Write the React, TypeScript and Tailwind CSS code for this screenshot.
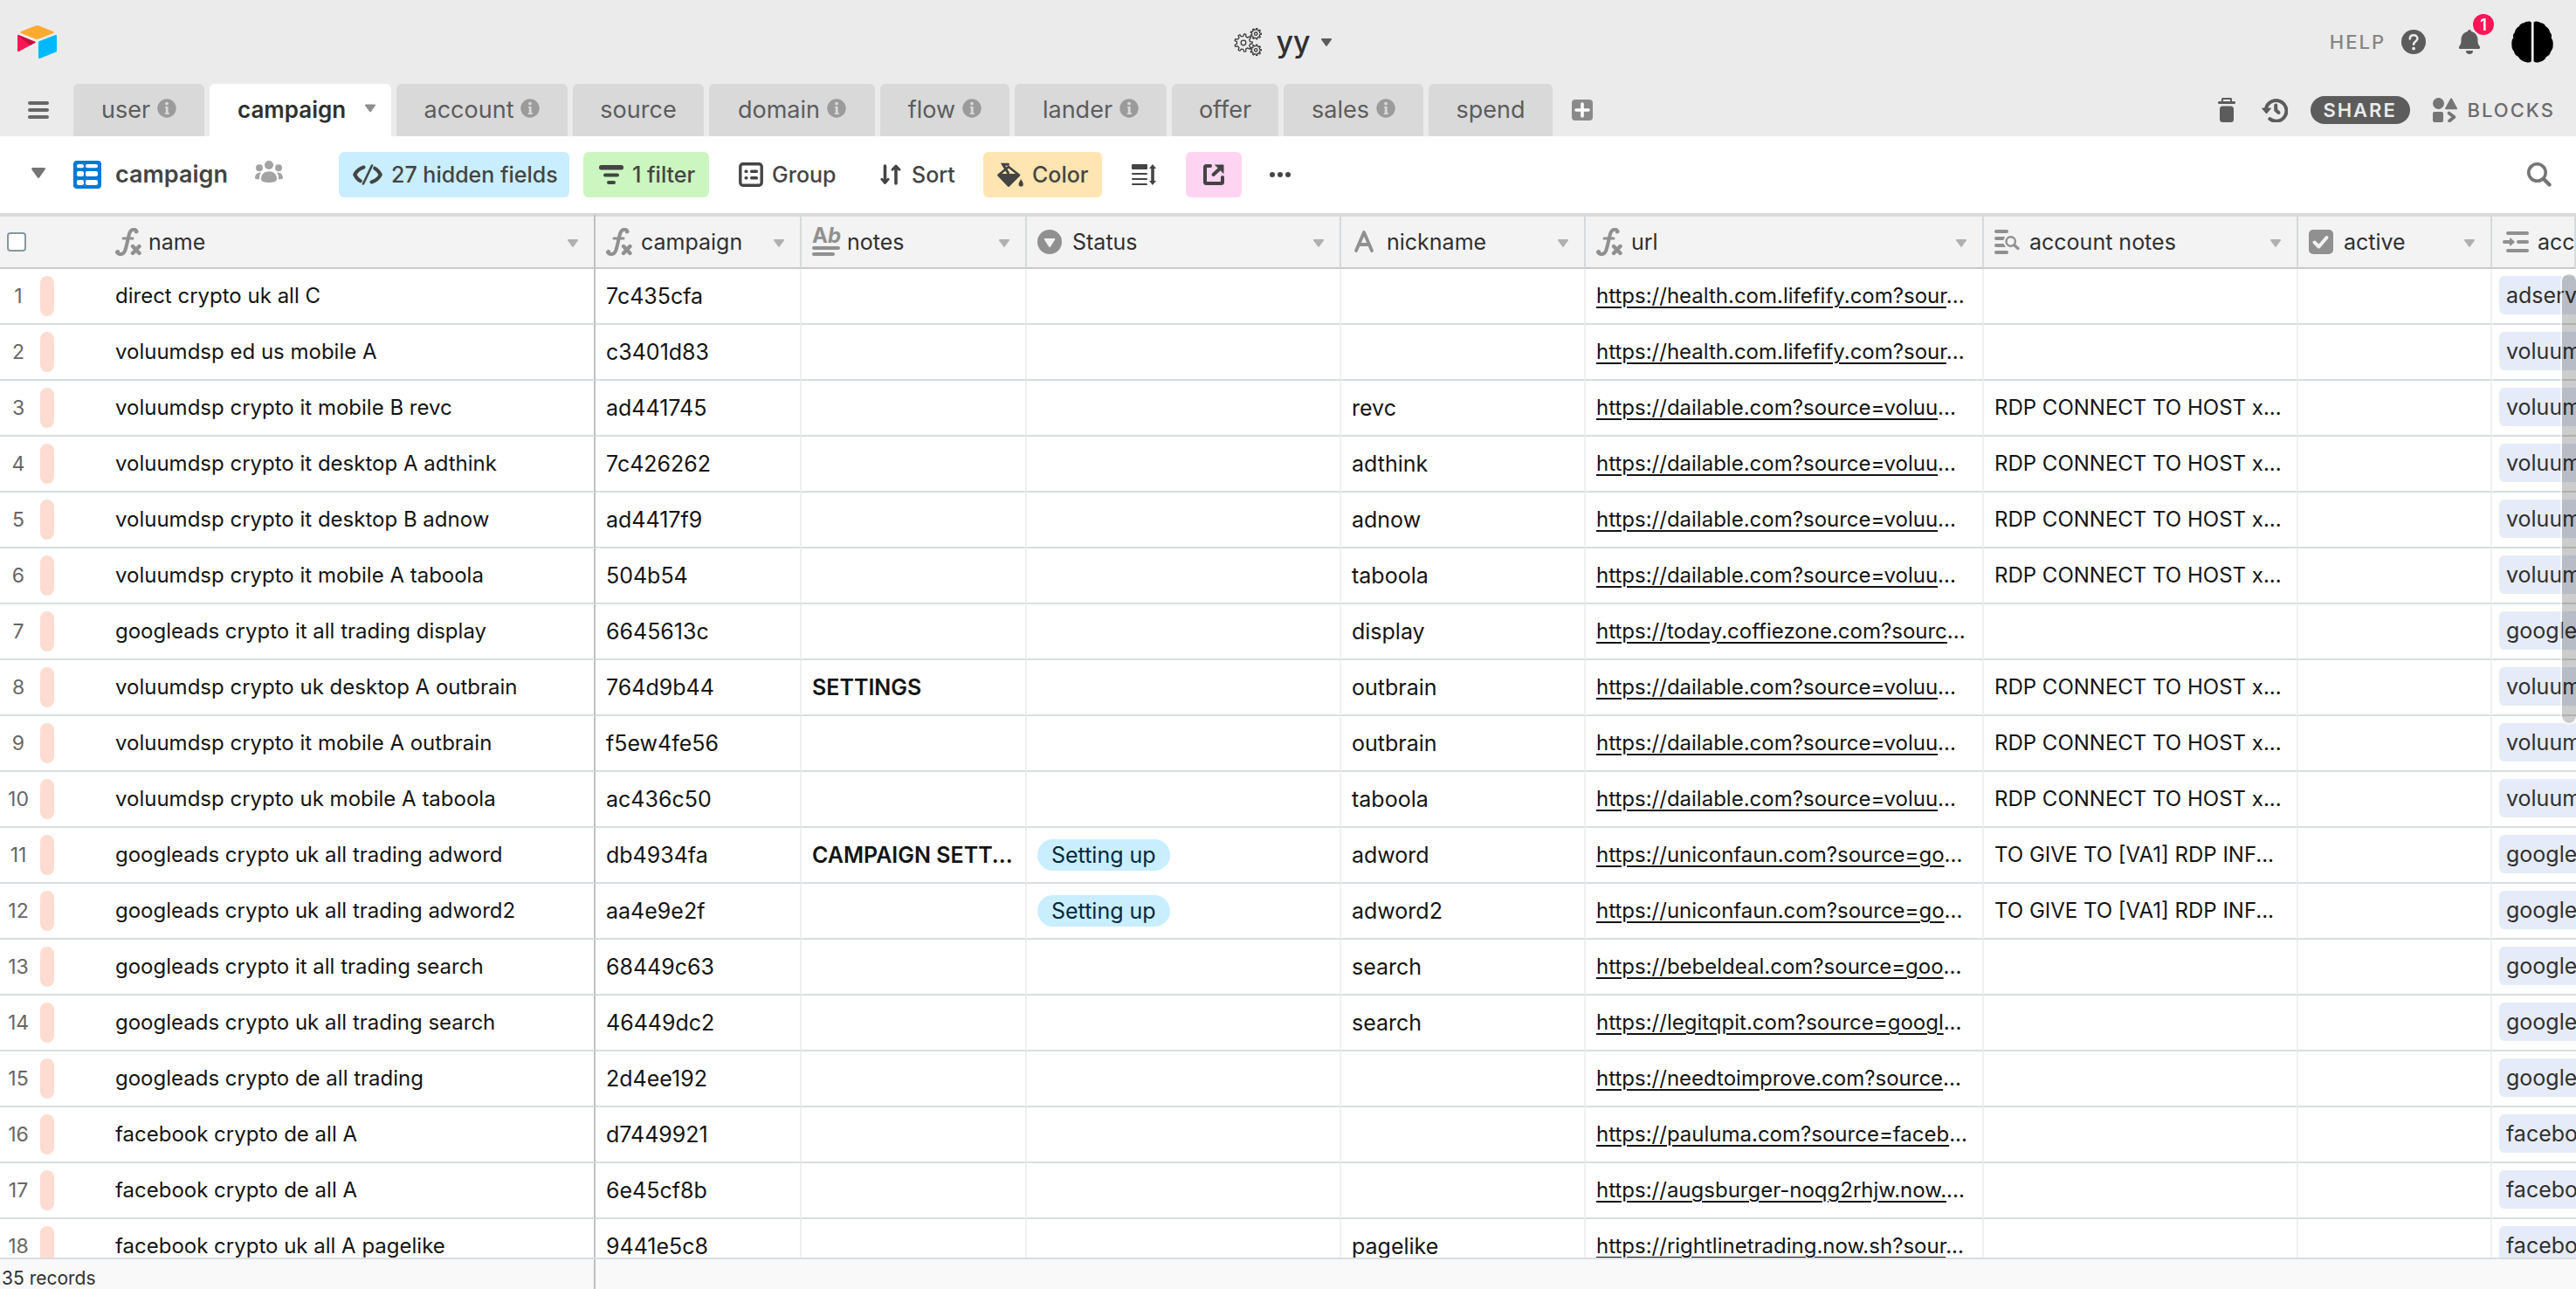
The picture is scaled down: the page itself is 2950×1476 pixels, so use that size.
import React from "react";

type Row = {
  name: string;
  id: string;
  notes?: string;
  status?: string;
  nick?: string;
  url: string;
  acc?: string;
  account: string;
};

const RDP = "RDP CONNECT TO HOST x...";
const VA1 = "TO GIVE TO [VA1] RDP INF...";
const DAIL = "https://dailable.com?source=voluu";

const rows: Row[] = [
  { name: "direct crypto uk all C", id: "7c435cfa", url: "https://health.com.lifefify.com?sour", account: "adserver" },
  { name: "voluumdsp ed us mobile A", id: "c3401d83", url: "https://health.com.lifefify.com?sour", account: "voluumdsp" },
  { name: "voluumdsp crypto it mobile B revc", id: "ad441745", nick: "revc", url: DAIL, acc: RDP, account: "voluumdsp" },
  { name: "voluumdsp crypto it desktop A adthink", id: "7c426262", nick: "adthink", url: DAIL, acc: RDP, account: "voluumdsp" },
  { name: "voluumdsp crypto it desktop B adnow", id: "ad4417f9", nick: "adnow", url: DAIL, acc: RDP, account: "voluumdsp" },
  { name: "voluumdsp crypto it mobile A taboola", id: "504b54", nick: "taboola", url: DAIL, acc: RDP, account: "voluumdsp" },
  { name: "googleads crypto it all trading display", id: "6645613c", nick: "display", url: "https://today.coffiezone.com?sourc", account: "googleads" },
  { name: "voluumdsp crypto uk desktop A outbrain", id: "764d9b44", notes: "SETTINGS", nick: "outbrain", url: DAIL, acc: RDP, account: "voluumdsp" },
  { name: "voluumdsp crypto it mobile A outbrain", id: "f5ew4fe56", nick: "outbrain", url: DAIL, acc: RDP, account: "voluumdsp" },
  { name: "voluumdsp crypto uk mobile A taboola", id: "ac436c50", nick: "taboola", url: DAIL, acc: RDP, account: "voluumdsp" },
  { name: "googleads crypto uk all trading adword", id: "db4934fa", notes: "CAMPAIGN SETT...", status: "Setting up", nick: "adword", url: "https://uniconfaun.com?source=go", acc: VA1, account: "googleads" },
  { name: "googleads crypto uk all trading adword2", id: "aa4e9e2f", status: "Setting up", nick: "adword2", url: "https://uniconfaun.com?source=go", acc: VA1, account: "googleads" },
  { name: "googleads crypto it all trading search", id: "68449c63", nick: "search", url: "https://bebeldeal.com?source=goo", account: "googleads" },
  { name: "googleads crypto uk all trading search", id: "46449dc2", nick: "search", url: "https://legitqpit.com?source=googl", account: "googleads" },
  { name: "googleads crypto de all trading", id: "2d4ee192", url: "https://needtoimprove.com?source", account: "googleads" },
  { name: "facebook crypto de all A", id: "d7449921", url: "https://pauluma.com?source=faceb", account: "facebook" },
  { name: "facebook crypto de all A", id: "6e45cf8b", url: "https://augsburger-noqg2rhjw.now.", account: "facebook" },
  { name: "facebook crypto uk all A pagelike", id: "9441e5c8", nick: "pagelike", url: "https://rightlinetrading.now.sh?sour", account: "facebook" },
];

function Caret({ className }: { className: string }) {
  return (
    <svg viewBox="0 0 12 9" className={className} fill="currentColor" aria-hidden="true">
      <path d="M1 0h10a1 1 0 0 1 .8 1.5L6.7 8.6a.9.9 0 0 1-1.4 0L.2 1.5A1 1 0 0 1 1 0z" />
    </svg>
  );
}

function Logo() {
  return (
    <svg viewBox="0 0 45 38" className="h-[38px] w-[45px]" aria-hidden="true">
      <path d="M20.5.4a6 6 0 0 1 4 0l16.3 6.7c1 .4 1 1.5 0 1.9l-16.300 6.600a6 6 0 0 1-4 0L4.100 9c-1-.4-1-1.500 0-1.900z" fill="#ffa92d" />
      <path d="M24 19.500c0-.6.3-1 .8-1.200L43.600 11c.7-.3 1.400.2 1.400.9v17.500c0 .5-.3.900-.8 1.100L25.400 37.900c-.7.3-1.400-.200-1.400-.900z" fill="#00b9fc" />
      <path d="M1.600 11.200 20 18.700c.7.300.7 1.100 0 1.400L2 29.700c-.800.500-2 .1-2-.8V12c0-.8.900-1.100 1.600-.8z" fill="#ff1656" />
      <path d="M1.600 11.200 20 18.700c.7.300.7 1.100 0 1.400l-5.500 2.900L.5 11.400z" fill="#c4113f" />
    </svg>
  );
}

function gear(cx: number, cy: number, ro: number, ri: number, n: number) {
  const pts: string[] = [];
  for (let i = 0; i < n; i++) {
    const steps: [number, number][] = [
      [-0.28, ri],
      [-0.14, ro],
      [0.14, ro],
      [0.28, ri],
    ];
    for (const [f, r] of steps) {
      const a = ((i + f) / n) * Math.PI * 2;
      pts.push(`${(cx + r * Math.cos(a)).toFixed(2)} ${(cy + r * Math.sin(a)).toFixed(2)}`);
    }
  }
  return `M${pts.join("L")}Z`;
}

function Gears() {
  return (
    <svg viewBox="0 0 32 32" className="size-8" fill="none" stroke="#3d3d3d" strokeWidth="1.3" strokeLinejoin="round" aria-hidden="true">
      <path d={gear(11, 17, 10.2, 7.6, 9)} />
      <circle cx="11" cy="17" r="2.8" />
      <path d={gear(25.2, 6.7, 6.2, 4.6, 9)} />
      <circle cx="25.2" cy="6.7" r="1.7" />
      <path d={gear(25.2, 25.3, 6.2, 4.6, 9)} />
      <circle cx="25.2" cy="25.3" r="1.7" />
    </svg>
  );
}

function Info() {
  return (
    <svg viewBox="0 0 22 22" className="mb-1 size-[22px] shrink-0" aria-hidden="true">
      <circle cx="11" cy="11" r="10.700" fill="#9b9b9b" />
      <circle cx="11" cy="5.600" r="1.900" fill="#d9d9d9" />
      <path d="M9 9h3.600v7.200H14V18H8.800v-1.800h1V10.600H9z" fill="#d9d9d9" />
    </svg>
  );
}

const tabs: { label: string; info?: boolean; w: string }[] = [
  { label: "user", info: true, w: "w-[150px]" },
  { label: "campaign", w: "w-[208px]" },
  { label: "account", info: true, w: "w-[196px]" },
  { label: "source", w: "w-[150px]" },
  { label: "domain", info: true, w: "w-[190px]" },
  { label: "flow", info: true, w: "w-[148px]" },
  { label: "lander", info: true, w: "w-[174px]" },
  { label: "offer", w: "w-[122px]" },
  { label: "sales", info: true, w: "w-[160px]" },
  { label: "spend", w: "w-[142px]" },
];

function TopBar() {
  return (
    <header className="bg-[#ebebeb]">
      <div className="grid h-24 grid-cols-[1fr_auto_1fr] items-center px-5">
        <a href="#home" aria-label="Home" className="justify-self-start">
          <Logo />
        </a>
        <button className="flex items-center pr-3">
          <Gears />
          <h1 className="ml-4 text-[34px] leading-10 font-medium text-[#303030]">yy</h1>
          <Caret className="ml-3 h-[9px] w-3 text-[#5c5c5c]" />
        </button>
        <div className="flex items-center justify-self-end pr-[6px]">
          <button className="flex items-center text-[22px] font-medium tracking-[2px] text-[#858585]">
            HELP
            <svg viewBox="0 0 28 28" className="ml-[18px] size-7" aria-hidden="true">
              <circle cx="14" cy="14" r="14" fill="#5c5c5c" />
              <path d="M9.800 10.600c0-2.600 1.800-4.300 4.300-4.300s4.300 1.600 4.300 3.900c0 3.300-4.300 3.300-4.300 6.500" fill="none" stroke="#ebebeb" strokeWidth="2.500" strokeLinecap="round" />
              <circle cx="14.100" cy="21.600" r="1.900" fill="#ebebeb" />
            </svg>
          </button>
          <button className="relative ml-[38px]" aria-label="Notifications">
            <svg viewBox="0 0 24 28" className="h-7 w-6" fill="#5c5c5c" aria-hidden="true">
              <path d="M12 0c1.100 0 2 .8 2 1.900 4.500 1 7.500 4.700 7.500 9.600 0 4.200.4 5.400 2.200 7.600.9 1.200.2 2.900-1.200 2.900h-21C.1 22-.6 20.300.3 19.100c1.800-2.200 2.200-3.400 2.200-7.600 0-4.900 3-8.600 7.500-9.600C10 .8 10.900 0 12 0z" />
              <path d="M8 24h8a4 4 0 0 1-8 0z" />
            </svg>
            <span className="absolute -top-[18px] left-4 flex size-6 items-center justify-center rounded-full bg-[#ff1656] text-[18px] font-semibold text-white">1</span>
          </button>
          <button className="ml-9" aria-label="Account">
            <svg viewBox="0 0 48 48" className="size-12" fill="#000" aria-hidden="true">
              <path d="M22.800 1.500C21-.3 16.500.3 14.500 2.300c-2.500 0-5 1.800-5.500 3.700C6 7.500 4 10.500 4 13c-2 1.500-2.500 4.500-1.700 6.500C.5 21 0 25 .5 28c-.3 3 1.200 5.500 2.500 7 .5 3 2.500 5 5 6 1.500 3 5 5.500 8.500 6 3 1 5.500.500 6.300-1z" />
              <path d="M25.600 1.500c1.800-1.800 6-1.200 8 .8 2.500 0 5 1.800 5.500 3.700 3 1.500 5 4.500 5 7 2 1.500 2.300 4.500 1.500 6.500 1.800 1.500 2.500 5.500 2 8.500.3 3-1.200 5.500-2.500 7-.5 3-2.500 5-5 6-1.500 3-4.500 5.500-8 6-3 1-5.700.5-6.500-1z" />
            </svg>
          </button>
        </div>
      </div>
      <div className="flex h-[60px] items-center pr-6">
        <button aria-label="Table list" className="flex w-[84px] shrink-0 flex-col items-start gap-1 pl-8">
          <span className="h-1 w-6 rounded-full bg-[#666]" />
          <span className="h-1 w-6 rounded-full bg-[#666]" />
          <span className="h-1 w-6 rounded-full bg-[#666]" />
        </button>
        <nav className="flex h-full gap-[6px]">
          {tabs.map((t) =>
            t.label === "campaign" ? (
              <button key={t.label} aria-current="page" className={`${t.w} flex items-center justify-between rounded-t-md bg-white pr-[18px] pl-8 text-[26px] leading-8 font-semibold text-[#303030]`}>
                {t.label}
                <Caret className="mb-1 h-3 w-3 text-[#8e8e8e]" />
              </button>
            ) : (
              <button key={t.label} className={`${t.w} flex items-center justify-center gap-2 rounded-t-md bg-[#d9d9d9] text-[27px] leading-8 text-[#5c5c5c]`}>
                {t.label}
                {t.info && <Info />}
              </button>
            ),
          )}
        </nav>
        <button aria-label="Add table" className="ml-[22px]">
          <svg viewBox="0 0 24 24" className="size-6" aria-hidden="true">
            <rect width="24" height="24" rx="4" fill="#8a8a8a" />
            <path d="M12 5v14M5 12h14" stroke="#fff" strokeWidth="3.600" strokeLinecap="round" />
          </svg>
        </button>
        <div className="ml-auto flex items-center text-[22px] leading-8 font-medium tracking-[2px] text-[#6b6b6b]">
          <button aria-label="Trash">
            <svg viewBox="0 0 20 28" className="h-7 w-5" fill="#5c5c5c" aria-hidden="true">
              <path fillRule="evenodd" d="M4 4V1.500C4 .7 4.700 0 5.500 0h9c.8 0 1.500.7 1.500 1.500V4h2.500a1.500 1.500 0 0 1 1.500 2.200c-.3.500-.7.800-1.500.800h-17A1.500 1.500 0 0 1 0 5.500C0 4.700.7 4 1.500 4zM6 4h8V2H6z" />
              <rect x="2" y="9.500" width="16" height="18.500" rx="3.500" />
            </svg>
          </button>
          <button aria-label="History" className="ml-[30px]">
            <svg viewBox="0 0 30 28" className="h-7 w-[30px]" fill="none" stroke="#5c5c5c" strokeWidth="4" strokeLinecap="round" aria-hidden="true">
              <path d="M5 12.500A11.800 11.800 0 1 1 9.300 24.200" />
              <path d="M16.200 8.500V14l3.300 3" />
              <path d="M.8 12.200h9.500l-4.800 5.500z" fill="#5c5c5c" strokeWidth="1.200" strokeLinejoin="round" />
            </svg>
          </button>
          <button className="ml-[26px] w-[114px] rounded-full bg-[#5c5c5c] font-semibold text-[#ebebeb]">SHARE</button>
          <button className="ml-[26px] flex items-center">
            <svg viewBox="0 0 28 28" className="mr-3 size-7" fill="#757575" aria-hidden="true">
              <circle cx="6.500" cy="6.500" r="6.500" />
              <path d="M20.300.800c.4-.8 1.200-.8 1.600 0l6 10.900c.4.800 0 1.500-.8 1.500H15c-.8 0-1.200-.7-.8-1.500z" />
              <rect y="16" width="12" height="12" rx="2" />
              <path d="M18.500 17.500 24.500 22l-5.500 4.500" fill="none" stroke="#757575" strokeWidth="3.600" strokeLinecap="round" strokeLinejoin="round" />
            </svg>
            BLOCKS
          </button>
        </div>
      </div>
    </header>
  );
}

function Toolbar() {
  const b = "flex h-[52px] shrink-0 items-center rounded-md whitespace-nowrap";
  return (
    <div className="flex h-[88px] items-center pr-7 text-[25px] leading-8 font-medium text-[#444]">
      <button className="flex w-[388px] shrink-0 items-center pl-9 text-[27px] font-semibold">
        <Caret className="mb-1 h-3 w-4 text-[#757575]" />
        <svg viewBox="0 0 32 32" className="ml-8 size-8" aria-hidden="true">
          <rect width="32" height="32" rx="4" fill="#0079d5" />
          <g fill="#fff">
            <rect x="4" y="4" width="8" height="4.200" rx="2" />
            <rect x="14" y="4" width="14" height="4.200" rx="2" />
            <rect x="4" y="12" width="8" height="6" rx="2" />
            <rect x="14" y="12" width="14" height="6" rx="2" />
            <rect x="4" y="22" width="8" height="6" rx="2" />
            <rect x="14" y="22" width="14" height="6" rx="2" />
          </g>
        </svg>
        <span className="ml-4 w-40 text-left">campaign</span>
        <svg viewBox="0 0 32 25" className="mb-2 h-[25px] w-8" fill="#a3a3a3" aria-hidden="true">
          <circle cx="16" cy="5" r="5" />
          <circle cx="5" cy="8.200" r="4" />
          <circle cx="27" cy="8.200" r="4" />
          <path d="M16 12.300c5 0 9 3.200 9 8.700 0 3-4 4-9 4s-9-1-9-4c0-5.500 4-8.700 9-8.700z" />
          <path d="M6.800 13.500C2.500 13 0 16 0 20c0 1 2.500 1.500 5 1.300 0-3 .3-5.300 1.800-7.800zM25.200 13.500c4.300-.5 6.800 2.500 6.800 6.500 0 1-2.500 1.500-5 1.300 0-3-.3-5.300-1.800-7.800z" />
        </svg>
      </button>
      <div className="flex gap-4">
        <button className={`${b} w-[264px] bg-[#c8eeff] pl-4`}>
          <svg viewBox="0 0 34 24" className="mr-[10px] h-6 w-[34px] shrink-0" fill="none" stroke="#444" strokeWidth="4" strokeLinecap="round" strokeLinejoin="round" aria-hidden="true">
            <path d="M12.500 3.500C7.500 5 4 8.500 2.200 12c1.800 3.500 3.800 5.700 6.600 7.300" />
            <path d="M21.500 20.500C26.500 19 30 15.500 31.800 12c-1.800-3.500-3.800-5.700-6.600-7.300" />
            <path d="M22 1.500 12 22.500" strokeWidth="2.600" />
          </svg>
          27 hidden fields
        </button>
        <button className={`${b} w-36 bg-[#cbf6c0] pl-[18px]`}>
          <svg viewBox="0 0 28 22" className="mr-[10px] h-[22px] w-7 shrink-0" fill="#444" aria-hidden="true">
            <rect width="28" height="5.500" rx="2.500" />
            <rect x="5" y="9.500" width="18" height="4" rx="2" />
            <rect x="9" y="18" width="10" height="4" rx="2" />
          </svg>
          1 filter
        </button>
        <button className={`${b} w-[146px] pl-[18px]`}>
          <svg viewBox="0 0 28 28" className="mr-[10px] size-7 shrink-0" fill="#444" aria-hidden="true">
            <rect x="1.800" y="1.800" width="24.400" height="24.400" rx="3" fill="none" stroke="#444" strokeWidth="3.400" />
            <rect x="6.500" y="8.500" width="4" height="3.600" rx="1.500" />
            <rect x="13" y="8.500" width="9" height="3.600" rx="1.500" />
            <rect x="6.500" y="16" width="4" height="3.600" rx="1.500" />
            <rect x="13" y="16" width="9" height="3.600" rx="1.500" />
          </svg>
          Group
        </button>
        <button className={`${b} w-[120px] pl-[18px]`}>
          <svg viewBox="0 0 24 24" className="mr-3 size-6 shrink-0" fill="none" stroke="#444" strokeWidth="3.600" strokeLinecap="round" strokeLinejoin="round" aria-hidden="true">
            <path d="M5.500 2v18M18 22V4" />
            <path d="M1.800 17.200 5.500 21.500l3.700-4.300M14 6.300 18 2l4 4.300" strokeWidth="2.800" fill="#444" />
          </svg>
          Sort
        </button>
        <button className={`${b} w-[136px] bg-[#ffe5b1] pl-4`}>
          <svg viewBox="0 0 30 28" className="mr-[10px] h-7 w-[30px] shrink-0" fill="#444" aria-hidden="true">
            <path d="M13 5 25 14.500 13 26.500 1.500 14.500z" fill="none" stroke="#444" strokeWidth="2.600" strokeLinejoin="round" />
            <path d="M1.500 13h24L14 26.800a1.400 1.400 0 0 1-2 0L1 15z" />
            <path d="M12.500 12 6.500 2.200h6" fill="none" stroke="#444" strokeWidth="3" strokeLinecap="round" />
            <path d="M27.200 19c1.700 3 2.600 4.500 2.600 5.900a2.600 2.600 0 0 1-5.200 0c0-1.400.9-2.900 2.600-5.900z" />
          </svg>
          Color
        </button>
        <button aria-label="Row height" className={`${b} w-16 pl-[18px]`}>
          <svg viewBox="0 0 28 24" className="h-6 w-7 shrink-0" fill="#444" aria-hidden="true">
            <rect width="18" height="6" rx="1" />
            <rect y="10" width="18" height="2" rx="1" />
            <rect y="16" width="18" height="2" rx="1" />
            <rect y="22" width="18" height="2" rx="1" />
            <path d="M24 0l4 5h-2.200v14H28L24 24l-4-5h2.200V5H20z" />
          </svg>
        </button>
        <button aria-label="Share view" className={`${b} w-16 justify-center bg-[#ffd4f3]`}>
          <svg viewBox="0 0 24 24" className="size-6" fill="none" stroke="#444" strokeWidth="4" strokeLinecap="round" aria-hidden="true">
            <path d="M8 2H3.500C2.500 2 2 2.500 2 3.500v17c0 1 .5 1.500 1.500 1.500h17c1 0 1.500-.5 1.500-1.500V15" />
            <path d="M11.500 12 18 6" />
            <path d="M14 1h9v9z" fill="#444" strokeWidth="1" strokeLinejoin="round" />
          </svg>
        </button>
        <button aria-label="More" className={`${b} px-4`}>
          <svg viewBox="0 0 24 6" className="h-[6px] w-6" fill="#444" aria-hidden="true">
            <circle cx="3" cy="3" r="3" />
            <circle cx="12" cy="3" r="3" />
            <circle cx="21" cy="3" r="3" />
          </svg>
        </button>
      </div>
      <button aria-label="Search" className="ml-auto">
        <svg viewBox="0 0 28 28" className="size-7" fill="none" stroke="#757575" strokeLinecap="round" aria-hidden="true">
          <circle cx="11.500" cy="11.500" r="9.700" strokeWidth="3.600" />
          <path d="M19 19l6.500 6.500" strokeWidth="4.400" />
        </svg>
      </button>
    </div>
  );
}

type IconKind = "fx" | "long" | "select" | "text" | "lookup" | "check" | "link";

function FieldIcon({ kind }: { kind: IconKind }) {
  const g = "#909090";
  if (kind === "fx")
    return (
      <svg viewBox="0 0 30 32" className="h-8 w-[30px]" fill="none" stroke={g} strokeLinecap="round" aria-hidden="true">
        <path d="M24.500 4C23.500 1 18.500 .8 16.500 5.500 14.500 11 13.500 20 11 26.500c-2 4.500-7 4.500-9 1.500" strokeWidth="4" />
        <circle cx="24" cy="4.300" r="1" strokeWidth="2.400" />
        <circle cx="2.800" cy="27.500" r="1" strokeWidth="2.800" />
        <path d="M9 12h11" strokeWidth="3" />
        <path d="M20 21l7.500 8M27.500 21 20 29" strokeWidth="4.400" />
      </svg>
    );
  if (kind === "long")
    return (
      <span className="flex w-8 flex-col gap-[3px]" aria-hidden="true">
        <span className="text-[24px] leading-[18px] font-bold text-[#909090]">
          A<i>b</i>
        </span>
        <span className="h-1 w-8 rounded-full bg-[#909090]" />
        <span className="h-1 w-[26px] rounded-full bg-[#909090]" />
      </span>
    );
  if (kind === "select")
    return (
      <svg viewBox="0 0 28 28" className="size-7" aria-hidden="true">
        <circle cx="14" cy="14" r="14" fill={g} />
        <path d="M9 10h10.200c.9 0 1.300.7.900 1.400l-5.200 8.300c-.4.600-1.200.6-1.600 0L8 11.400C7.600 10.700 8.100 10 9 10z" fill="#f3f3f3" />
      </svg>
    );
  if (kind === "text")
    return (
      <svg viewBox="0 0 28 28" className="size-7" fill="none" stroke={g} strokeWidth="3.800" strokeLinecap="round" strokeLinejoin="round" aria-hidden="true">
        <path d="M5 24 14 3l9 21M8 17h12" />
      </svg>
    );
  if (kind === "lookup")
    return (
      <svg viewBox="0 0 29 28" className="h-7 w-[29px]" fill={g} aria-hidden="true">
        <rect width="16" height="4" rx="2" />
        <path d="M2 8h10l-1.500 4H2a2 2 0 0 1 0-4zM2 16h8.500L13 20H2a2 2 0 0 1 0-4z" />
        <rect y="24" width="16" height="4" rx="2" />
        <circle cx="18.700" cy="13.500" r="5.200" fill="none" stroke={g} strokeWidth="2.400" />
        <path d="M22.500 17.500 27 21.500" stroke={g} strokeWidth="3.200" strokeLinecap="round" />
      </svg>
    );
  if (kind === "check")
    return (
      <svg viewBox="0 0 28 28" className="size-7" aria-hidden="true">
        <rect width="28" height="28" rx="5" fill={g} />
        <path d="M6.500 14.500l5 5L20.500 9" fill="none" stroke="#f3f3f3" strokeWidth="4" strokeLinecap="round" strokeLinejoin="round" />
      </svg>
    );
  return (
    <svg viewBox="0 0 30 24" className="h-6 w-[30px]" fill={g} aria-hidden="true">
      <rect x="4" width="26" height="4" rx="2" />
      <rect x="16" y="10" width="14" height="4" rx="2" />
      <rect x="4" y="20" width="26" height="4" rx="2" />
      <path d="M2 10h6V8.300c0-.8.800-1 1.300-.6l4.300 3.700c.3.300.3.900 0 1.200l-4.300 3.700c-.5.400-1.300.2-1.300-.6V14H2a2 2 0 0 1 0-4z" />
    </svg>
  );
}

const columns: { label: string; kind: IconKind }[] = [
  { label: "name", kind: "fx" },
  { label: "campaign", kind: "fx" },
  { label: "notes", kind: "long" },
  { label: "Status", kind: "select" },
  { label: "nickname", kind: "text" },
  { label: "url", kind: "fx" },
  { label: "account notes", kind: "lookup" },
  { label: "active", kind: "check" },
  { label: "account", kind: "link" },
];

function Grid() {
  const td = "h-16 overflow-hidden border-r-2 border-r-[#f0f0f0] border-b-2 border-b-[#d9dddf] pl-3 whitespace-nowrap";
  return (
    <div className="relative min-h-0 flex-1">
      <div className="h-full overflow-hidden">
        <table className="w-full table-fixed border-separate border-spacing-0 text-left text-[25px] leading-8 text-[#141414]">
          <colgroup>
            <col className="w-[132px]" />
            <col className="w-[550px]" />
            <col className="w-[236px]" />
            <col className="w-[258px]" />
            <col className="w-[360px]" />
            <col className="w-[280px]" />
            <col className="w-[456px]" />
            <col className="w-[360px]" />
            <col className="w-[222px]" />
            <col />
          </colgroup>
          <thead>
            <tr>
              <th className="h-16 border-t-4 border-b-2 border-t-[#d9d9d9] border-b-[#c8c8c8] bg-[#f3f3f3] pl-2">
                <input type="checkbox" aria-label="Select all records" className="block size-[22px] appearance-none rounded border-2 border-[#8797a0] bg-white" />
              </th>
              {columns.map((c, i) => (
                <th
                  key={c.label}
                  className={`h-16 overflow-hidden border-t-4 border-r-2 border-b-2 border-t-[#d9d9d9] border-b-[#c8c8c8] bg-[#f3f3f3] font-normal whitespace-nowrap text-[#303030] ${
                    i === 0 ? "border-r-[#c0c0c0]" : "border-r-[#d5dadc] pl-3"
                  }`}
                >
                  <div className="flex items-center">
                    <span className={`flex shrink-0 ${i === 0 ? "w-[38px]" : "w-10"}`}>
                      <FieldIcon kind={c.kind} />
                    </span>
                    {c.label}
                    {c.label !== "account" && <Caret className="mt-[3px] mr-[18px] ml-auto h-[9px] w-3 text-[#b0b0b0]" />}
                  </div>
                </th>
              ))}
            </tr>
          </thead>
          <tbody>
            {rows.map((r, i) => (
              <tr key={i}>
                <td className="h-16 border-b-2 border-[#d9dddf]">
                  <div className="flex items-center">
                    <span className="w-[42px] text-center text-[23px] text-[#666]">{i + 1}</span>
                    <span className="ml-1 h-[46px] w-4 rounded-full bg-[#ffdcd1]" />
                  </div>
                </td>
                <td className="h-16 overflow-hidden border-r-2 border-b-2 border-r-[#c0c0c0] border-b-[#d9dddf] text-[24px] whitespace-nowrap">{r.name}</td>
                <td className={td}>{r.id}</td>
                <td className={`${td} font-semibold`}>{r.notes}</td>
                <td className={td}>
                  {r.status && <span className="inline-block rounded-full bg-[#c8eeff] px-4 leading-9 text-[#04283f]">{r.status}</span>}
                </td>
                <td className={td}>{r.nick}</td>
                <td className={`${td} text-[24px]`}>
                  <a href={r.url} className="underline decoration-2 underline-offset-4">
                    {r.url}
                  </a>
                  ...
                </td>
                <td className={`${td} text-[24px]`}>{r.acc}</td>
                <td className={td} />
                <td className="h-16 overflow-hidden border-b-2 border-[#d9dddf] pl-2 whitespace-nowrap">
                  <span className="mb-[2px] inline-block rounded-md bg-[#e5ebf8] px-2 align-middle leading-[44px] text-[#303030]">{r.account}</span>
                </td>
              </tr>
            ))}
          </tbody>
        </table>
      </div>
      <div className="absolute top-[70px] right-0 h-[514px] w-4 rounded-full bg-black/20 outline-2 outline-white/60" />
    </div>
  );
}

export default function App() {
  return (
    <div className="flex h-screen flex-col overflow-hidden bg-white font-['Inter',sans-serif]">
      <TopBar />
      <Toolbar />
      <Grid />
      <footer className="flex h-9 shrink-0 border-t-2 border-[#d9dddf] bg-[#f9f9f9] text-[21px] leading-[44px] text-[#303030]">
        <span className="w-[682px] overflow-hidden border-r-2 border-[#c0c0c0] pl-[2px]">35 records</span>
      </footer>
    </div>
  );
}
